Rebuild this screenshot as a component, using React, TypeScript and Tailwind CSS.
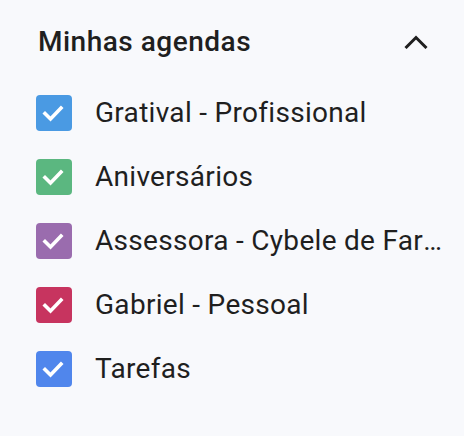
const calendars = [
  { name: 'Gratival - Profissional', color: 'bg-[#4a9ae3]' },
  { name: 'Aniversários', color: 'bg-[#5bb780]' },
  { name: 'Assessora - Cybele de Faria', color: 'bg-[#9a6cae]' },
  { name: 'Gabriel - Pessoal', color: 'bg-[#c7345f]' },
  { name: 'Tarefas', color: 'bg-[#5086ec]' },
];

function Check({ color }: { color: string }) {
  return (
    <span className={`flex h-9 w-9 shrink-0 items-center justify-center rounded-[4px] ${color}`}>
      <svg viewBox="0 0 36 36" className="h-9 w-9" fill="none" stroke="white" strokeWidth={3.6} strokeLinecap="square">
        <path d="M9 18.5l5.5 5.5 10.5-11" />
      </svg>
    </span>
  );
}

export default function App() {
  return (
    <div className="h-[436px] w-[464px] overflow-hidden bg-[#f8f9fc] font-['Roboto',sans-serif] text-[#1f1f1f]">
      <div className="flex items-center justify-between pl-[38px] pr-[36px] pt-[22px]">
        <h2 className="text-[28px] font-medium leading-[40px] tracking-[0.5px]">Minhas agendas</h2>
        <svg viewBox="0 0 24 14" className="h-[14px] w-6" fill="none" stroke="#1f1f1f" strokeWidth={3}>
          <path d="M1.5 13L12 2.5 22.5 13" />
        </svg>
      </div>
      <ul className="mt-[19px] pl-[36px] pr-[22px]">
        {calendars.map((c) => (
          <li key={c.name} className="flex h-16 items-center gap-[23px] overflow-hidden">
            <Check color={c.color} />
            <span className="truncate text-[28px] tracking-[0.3px]">{c.name}</span>
          </li>
        ))}
      </ul>
    </div>
  );
}
